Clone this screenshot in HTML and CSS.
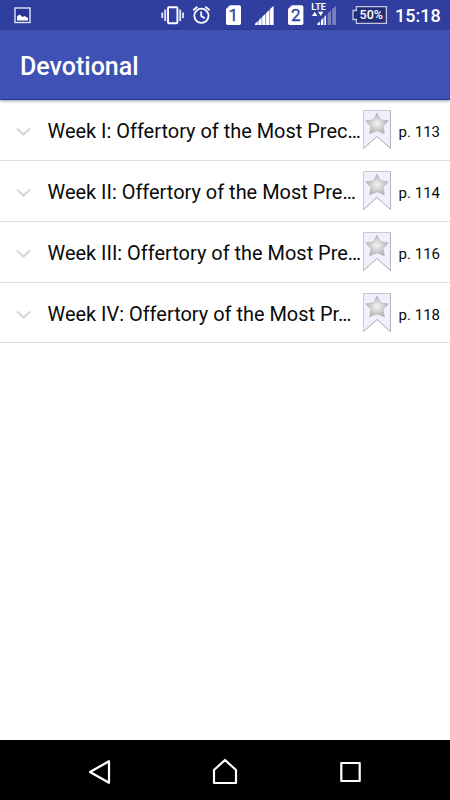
FILE: index.html
```html
<!DOCTYPE html>
<html lang="en">
<head>
    <meta charset="UTF-8">
    <meta name="viewport" content="width=device-width, initial-scale=1.0">
    <title>Devotional</title>
    <link rel="stylesheet" href="styles.css">
</head>
<body>

<!-- shared shapes for the list rows -->
<svg class="defs" width="0" height="0">
    <defs>
        <radialGradient id="silver">
            <stop offset="0" stop-color="#f4f4f4"/>
            <stop offset="1" stop-color="#b4b4b4"/>
        </radialGradient>
        <symbol id="chevron" viewBox="0 0 16 10">
            <path d="M.9 1.5 L7.5 7.5 L14.1 1.5" fill="none" stroke="#d6d6d6" stroke-width="2.1"/>
        </symbol>
        <symbol id="bookmark" viewBox="0 0 28 40">
            <path d="M.5 .5 H27.5 V38.5 L14 26.5 L.5 38.5 Z" fill="#f0f0fd" stroke="#c9c9d3" stroke-width="1"/>
            <path d="M27.5 .5 V38.5 L14 26.5 L.5 38.5" fill="none" stroke="#a9a9b2" stroke-width=".7"/>
            <path d="M14 3 L17.4 9.8 L25.4 10.9 L19.9 16.3 L21.4 23.8 L14 20.7 L6.6 23.8 L8.1 16.3 L2.6 10.9 L10.6 9.8 Z" fill="url(#silver)" stroke="#b4b4b4" stroke-width=".7"/>
        </symbol>
    </defs>
</svg>

<div class="status-bar">
    <svg class="picture" width="32" height="30" viewBox="0 0 32 30">
        <rect x="15" y="8" width="15" height="14.5" fill="#283593" stroke="#e2e4f3" stroke-width="1.4"/>
        <path d="M17 20.5 V16.5 L19.5 14.5 L22.5 17 L24.5 16 L28 18 V20.5 Z" fill="#fff"/>
    </svg>
    <svg width="28" height="30" viewBox="160 0 28 30">
        <rect x="168" y="7.3" width="9.4" height="16" rx="1" fill="none" stroke="#fff" stroke-width="1.9"/>
        <path d="M165.2 9.5 V21 M162.3 12.5 V18 M180.2 9.5 V21 M183.1 12.5 V18" stroke="#dfe1f1" stroke-width="1.9"/>
    </svg>
    <svg width="26" height="30" viewBox="188 0 26 30">
        <circle cx="201.4" cy="15.8" r="7.1" fill="none" stroke="#fff" stroke-width="1.8"/>
        <path d="M201.2 11.5 V16 L204.7 18.3 M193.2 10.2 L197.4 6.8 M209.6 10.2 L205.4 6.8" fill="none" stroke="#fff" stroke-width="1.8"/>
    </svg>
    <svg width="36" height="30" viewBox="214 0 36 30">
        <path d="M230 5.2 H239.3 Q241 5.2 241 7 V23.2 Q241 25 239.3 25 H227.7 Q226 25 226 23.2 V9 Z" fill="#fff"/>
        <text class="sim" x="233.4" y="20.9">1</text>
    </svg>
    <svg width="30" height="30" viewBox="250 0 30 30">
        <path d="M254.5 25 L273.5 6 V25 Z" fill="#9aa2d2"/>
        <path d="M255 25 V23.8 L257.7 21.2 V25 Z M258.7 25 V20.4 L261.3 17.6 V25 Z M262.3 25 V16.7 L265.1 14 V25 Z M266.2 25 V13 L269 10.2 V25 Z M270.1 25 V9.1 L273.5 6 V25 Z" fill="#fff"/>
    </svg>
    <svg width="27" height="30" viewBox="280 0 27 30">
        <path d="M292 5.2 H301.7 Q303.4 5.2 303.4 7 V23.2 Q303.4 25 301.7 25 H289.7 Q288 25 288 23.2 V9 Z" fill="#fff"/>
        <text class="sim" x="295.7" y="20.9">2</text>
    </svg>
    <svg width="38" height="30" viewBox="307 0 38 30">
        <path d="M317.3 25 V23.8 L319.9 21.2 V25 Z M320.9 25 V20.4 L323.4 17.6 V25 Z M324.4 25 V16.7 L326 15 V25 Z" fill="#fff"/>
        <path d="M327.6 25 V13.4 L331 10.2 V25 Z M332.2 25 V9.1 L336 6 V25 Z" fill="#7680bf"/>
        <path d="M312 16 L314.7 11.8 L317.4 16 Z M318 11.8 H323.4 L320.7 16 Z" fill="#fff"/>
        <text class="lte" x="318.6" y="10">LTE</text>
    </svg>
    <svg width="48" height="30" viewBox="345 0 48 30">
        <path d="M356.4 6.7 H386.4 V23.3 H356.4 V19.5 H353 V10.5 H356.4 Z" fill="#252e76" stroke="#c3c7e4" stroke-width="1.3"/>
        <text class="charge" x="371.3" y="19.4">50%</text>
    </svg>
    <span class="clock">15:18</span>
</div>

<div class="app-bar">
    <h1>Devotional</h1>
</div>

<div class="list">
    <div class="row">
        <svg class="chevron"><use href="#chevron"/></svg>
        <span class="title">Week I: Offertory of the Most Prec…</span>
        <svg class="bookmark"><use href="#bookmark"/></svg>
        <span class="page">p. 113</span>
    </div>
    <div class="row">
        <svg class="chevron"><use href="#chevron"/></svg>
        <span class="title">Week II: Offertory of the Most Pre…</span>
        <svg class="bookmark"><use href="#bookmark"/></svg>
        <span class="page">p. 114</span>
    </div>
    <div class="row">
        <svg class="chevron"><use href="#chevron"/></svg>
        <span class="title">Week III: Offertory of the Most Pre…</span>
        <svg class="bookmark"><use href="#bookmark"/></svg>
        <span class="page">p. 116</span>
    </div>
    <div class="row">
        <svg class="chevron"><use href="#chevron"/></svg>
        <span class="title">Week IV: Offertory of the Most Pr…</span>
        <svg class="bookmark"><use href="#bookmark"/></svg>
        <span class="page">p. 118</span>
    </div>
</div>

<div class="nav-bar">
    <svg width="26" height="28" viewBox="0 0 26 28">
        <path d="M3 14 L22 3.2 V24.8 Z" fill="none" stroke="#fff" stroke-width="2.2" stroke-linejoin="round"/>
    </svg>
    <svg width="26" height="28" viewBox="0 0 26 28">
        <path d="M13 2 L24 12 V25 H2 V12 Z" fill="none" stroke="#fff" stroke-width="2.2" stroke-linejoin="round"/>
    </svg>
    <svg width="26" height="28" viewBox="0 0 26 28">
        <rect x="4.3" y="5" width="18.4" height="18" fill="none" stroke="#fff" stroke-width="2.2" stroke-linejoin="round"/>
    </svg>
</div>

</body>
</html>
```
FILE: styles.css
```css
body {
    font-family: Roboto, sans-serif;
    margin: 0;
    height: 100vh;
    display: flex;
    flex-direction: column;
    overflow: hidden;
    background-color: #fff;
    color: #0a0a0a;
}
svg {
    display: block;
    flex: none;
}
.defs {
    position: absolute;
}
.status-bar {
    flex: none;
    height: 30px;
    display: flex;
    align-items: center;
    background-color: #303f9f;
    color: #fff;
}
.status-bar .picture {
    margin-right: 128px;
}
.status-bar text {
    text-anchor: middle;
}
.sim {
    font-size: 17px;
    fill: #303f9f;
    stroke: #303f9f;
    stroke-width: 0.3px;
}
.lte {
    font-size: 9px;
    font-weight: bold;
    fill: #fff;
}
.charge {
    font-size: 12.5px;
    font-weight: 500;
    fill: #fff;
}
.clock {
    margin-left: 2px;
    font-size: 18px;
    font-weight: 500;
    line-height: 30px;
    padding-top: 1px;
}
.app-bar {
    flex: none;
    box-sizing: border-box;
    height: 70px;
    padding-left: 20px;
    display: flex;
    align-items: center;
    background-color: #3f51b5;
    border-bottom: 1px solid #1a35a8;
    box-shadow: 0 1px 3px rgba(0, 0, 0, 0.4);
    z-index: 1;
}
h1 {
    margin: 3px 0 0;
    font-size: 25px;
    font-weight: 500;
    color: #fff;
}
.list {
    flex: 1;
}
.row {
    box-sizing: border-box;
    height: 61px;
    padding: 0 10px 0 16px;
    display: flex;
    align-items: center;
    border-bottom: 1px solid #dcdcdc;
}
.row:last-child {
    height: 60px;
    padding-top: 1px;
}
.chevron {
    width: 16px;
    height: 10px;
    margin: 3px 15.5px 0 0;
}
.title {
    width: 315.5px;
    margin-top: 2px;
    font-size: 19.95px;
    white-space: nowrap;
}
.bookmark {
    width: 28px;
    height: 40px;
}
.page {
    margin: 4px 0 0 auto;
    font-size: 15px;
}
.nav-bar {
    flex: none;
    height: 60px;
    padding: 4px 87px 0;
    box-sizing: border-box;
    display: flex;
    align-items: center;
    justify-content: space-between;
    background-color: #000;
}
```
